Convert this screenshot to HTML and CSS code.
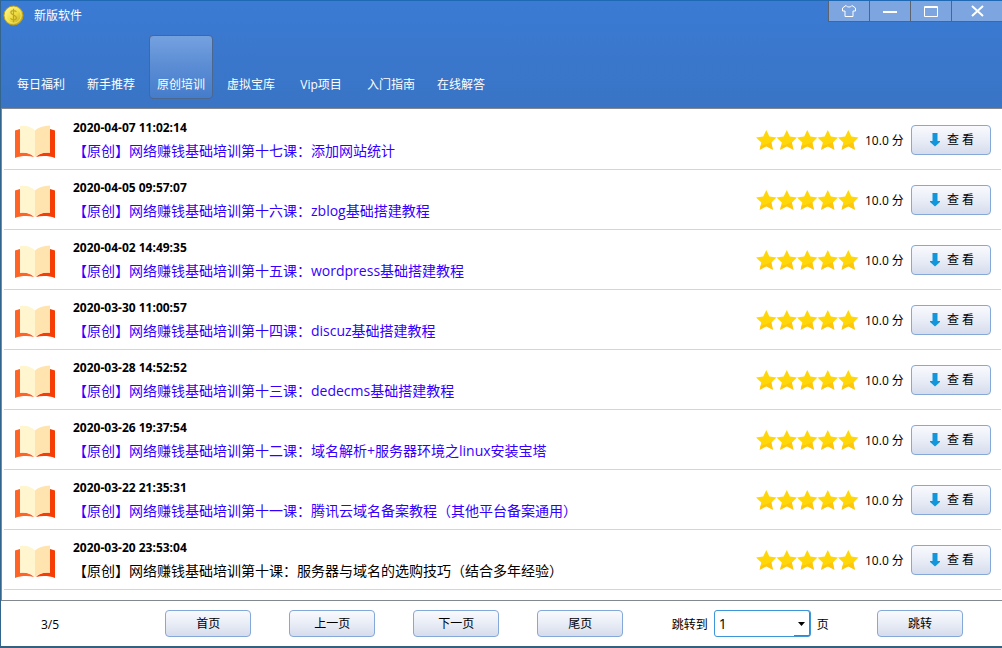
FILE: index.html
```html
<!DOCTYPE html>
<html lang="zh-CN">
<head>
<meta charset="utf-8">
<title>新版软件</title>
<link rel="stylesheet" href="styles.css">
</head>
<body>
<svg class="defs" aria-hidden="true">
  <defs>
    <linearGradient id="gold" x1="0" y1="0" x2="1" y2="1"><stop offset="0" stop-color="#fff9a0"/><stop offset=".5" stop-color="#f0df45"/><stop offset="1" stop-color="#b89a10"/></linearGradient>
    <symbol id="book" viewBox="0 0 42 36">
      <path d="M1 6.500L6 5v23.500c6-.5 11 1 14 4.500-6-1.500-13-1.300-19 1z" fill="#ff6426"/>
      <path d="M41 6.500L36 5v23.500c-6-.5-11 1-14 4.500 6-1.500 13-1.300 19 1z" fill="#f53d05"/>
      <path d="M6 2c6-1 12 1 15 4.500V33c-3-3.500-9-5-15-4z" fill="#fff5cf"/>
      <path d="M36 1.500C29 2 24 3.500 21 6.500V33c3-3.500 9-5 15-4z" fill="#ffe4b0"/>
    </symbol>
    <symbol id="stars" viewBox="0 0 103 20">
      <g id="star"><path d="M10.300 0l3.100 6.600 7.100.9-5.200 5 1.600 7.300-6.600-3.500-6.600 3.500 1.600-7.300L0 7.500l7.200-.9z" fill="#ffd708"/><path d="M18.500 9.300l-3.200 3.200 1.600 7.300-6.600-3.500-6.600 3.500.8-4C10 15 15 13 18.500 9.300z" fill="#ffc60a"/></g>
      <use href="#star" x="20.500"/><use href="#star" x="41"/><use href="#star" x="61.500"/><use href="#star" x="82"/>
    </symbol>
    <symbol id="down" viewBox="0 0 10 14"><path d="M2.500 0h5v8H10v1l-5 4.500L0 9V8h2.500z" fill="#1296db"/></symbol>
  </defs>
</svg>
<div class="window">
  <header class="header">
    <div class="titlebar">
      <svg class="coin" viewBox="0 0 22 22" aria-hidden="true"><circle cx="11" cy="11" r="10" fill="url(#gold)" stroke="#b79e1a"/><circle cx="11" cy="11" r="8" fill="none" stroke="#fff27a" stroke-width=".7"/><path d="M14 7.500c-.6-2-5.500-2.200-5.800.4-.2 2.700 6 2.500 5.800 5.700-.2 2.700-5.300 2.600-6.100.2M11 4v14" fill="none" stroke="#bfa522" stroke-width="1.300"/></svg>
      <h1 class="title">新版软件</h1>
      <div class="controls">
        <button class="control" aria-label="皮肤"><svg viewBox="0 0 16 14"><path d="M5 1.500L1.500 4v3H4v5.500h8V7h2.500V4L11 1.500C10 3.500 6 3.500 5 1.500z"/></svg></button>
        <button class="control" aria-label="最小化"><svg viewBox="0 0 16 14"><path class="thick" d="M1 8h14"/></svg></button>
        <button class="control" aria-label="最大化"><svg viewBox="0 0 16 14"><path d="M1.500 2.500h13v10h-13zM1 3.500h14"/></svg></button>
        <button class="control" aria-label="关闭"><svg viewBox="0 0 16 14"><path class="thick" d="M3 2l11 10M14 2L3 12"/></svg></button>
      </div>
    </div>
    <nav class="tabs">
      <button class="tab">每日福利</button>
      <button class="tab">新手推荐</button>
      <button class="tab active">原创培训</button>
      <button class="tab">虚拟宝库</button>
      <button class="tab">Vip项目</button>
      <button class="tab">入门指南</button>
      <button class="tab">在线解答</button>
    </nav>
  </header>
  <main class="list">
    <article class="row"><svg class="book"><use href="#book"/></svg><div class="info"><time class="date">2020-04-07 11:02:14</time><a class="link" href="#">【原创】网络赚钱基础培训第十七课：添加网站统计</a></div><svg class="stars"><use href="#stars"/></svg><span class="score">10.0 分</span><button class="btn view"><svg class="down"><use href="#down"/></svg>查 看</button></article>
    <article class="row"><svg class="book"><use href="#book"/></svg><div class="info"><time class="date">2020-04-05 09:57:07</time><a class="link" href="#">【原创】网络赚钱基础培训第十六课：zblog基础搭建教程</a></div><svg class="stars"><use href="#stars"/></svg><span class="score">10.0 分</span><button class="btn view"><svg class="down"><use href="#down"/></svg>查 看</button></article>
    <article class="row"><svg class="book"><use href="#book"/></svg><div class="info"><time class="date">2020-04-02 14:49:35</time><a class="link" href="#">【原创】网络赚钱基础培训第十五课：wordpress基础搭建教程</a></div><svg class="stars"><use href="#stars"/></svg><span class="score">10.0 分</span><button class="btn view"><svg class="down"><use href="#down"/></svg>查 看</button></article>
    <article class="row"><svg class="book"><use href="#book"/></svg><div class="info"><time class="date">2020-03-30 11:00:57</time><a class="link" href="#">【原创】网络赚钱基础培训第十四课：discuz基础搭建教程</a></div><svg class="stars"><use href="#stars"/></svg><span class="score">10.0 分</span><button class="btn view"><svg class="down"><use href="#down"/></svg>查 看</button></article>
    <article class="row"><svg class="book"><use href="#book"/></svg><div class="info"><time class="date">2020-03-28 14:52:52</time><a class="link" href="#">【原创】网络赚钱基础培训第十三课：dedecms基础搭建教程</a></div><svg class="stars"><use href="#stars"/></svg><span class="score">10.0 分</span><button class="btn view"><svg class="down"><use href="#down"/></svg>查 看</button></article>
    <article class="row"><svg class="book"><use href="#book"/></svg><div class="info"><time class="date">2020-03-26 19:37:54</time><a class="link" href="#">【原创】网络赚钱基础培训第十二课：域名解析+服务器环境之linux安装宝塔</a></div><svg class="stars"><use href="#stars"/></svg><span class="score">10.0 分</span><button class="btn view"><svg class="down"><use href="#down"/></svg>查 看</button></article>
    <article class="row"><svg class="book"><use href="#book"/></svg><div class="info"><time class="date">2020-03-22 21:35:31</time><a class="link" href="#">【原创】网络赚钱基础培训第十一课：腾讯云域名备案教程（其他平台备案通用）</a></div><svg class="stars"><use href="#stars"/></svg><span class="score">10.0 分</span><button class="btn view"><svg class="down"><use href="#down"/></svg>查 看</button></article>
    <article class="row"><svg class="book"><use href="#book"/></svg><div class="info"><time class="date">2020-03-20 23:53:04</time><a class="link plain" href="#">【原创】网络赚钱基础培训第十课：服务器与域名的选购技巧（结合多年经验）</a></div><svg class="stars"><use href="#stars"/></svg><span class="score">10.0 分</span><button class="btn view"><svg class="down"><use href="#down"/></svg>查 看</button></article>
  </main>
  <footer class="pager">
    <span class="count">3/5</span>
    <div class="pages">
      <button class="btn">首页</button>
      <button class="btn">上一页</button>
      <button class="btn">下一页</button>
      <button class="btn">尾页</button>
    </div>
    <div class="jump">
      <label for="page">跳转到</label>
      <span class="picker"><select id="page"><option>1</option><option>2</option><option>3</option><option>4</option><option>5</option></select><svg class="caret" viewBox="0 0 7 4" aria-hidden="true"><path d="M0 0h7L3.500 4z"/></svg></span>
      <span class="unit">页</span>
    </div>
    <button class="btn">跳转</button>
  </footer>
</div>
</body>
</html>
```
FILE: styles.css
```css
* { box-sizing: border-box; }

body {
  margin: 0;
  font: 12px/16px "Open Sans", "Noto Sans CJK SC", sans-serif;
  color: #000;
}

button, select { font: inherit; color: inherit; }
.defs { position: absolute; width: 0; height: 0; }

.window {
  display: flex;
  flex-direction: column;
  min-height: 100vh;
  border-left: 1px solid #33648c;
  border-bottom: 2px solid #36607f;
}

.header {
  height: 108px;
  border-top: 1px solid #1f68b4;
  background: linear-gradient(#3b7bd4, #3974c5);
  color: #fff;
}

.titlebar { display: flex; height: 34px; padding-left: 2px; }
.coin { width: 21px; height: 21px; margin-top: 4px; }
.title { margin: 6px 0 0 10px; font-size: 12px; font-weight: 400; line-height: 18px; }

.controls { display: flex; height: 21px; margin-left: auto; border-left: 1px solid #5b6270; }
.control {
  width: 41px;
  padding: 0;
  border: 0;
  border-right: 1px solid #5b6270;
  border-bottom: 1px solid #5b6270;
  background: #7da5e0;
}
.control:last-child { width: 50px; border-right: 0; }
.control svg { display: block; width: 16px; height: 14px; margin: 0 auto; fill: none; stroke: #fff; stroke-width: 1; }
.control .thick { stroke-width: 2; }

.tabs { display: flex; gap: 6px; padding-left: 8px; }
.tab {
  display: flex;
  align-items: flex-end;
  justify-content: center;
  width: 64px;
  height: 64px;
  padding: 0 0 5px;
  border: 1px solid transparent;
  border-radius: 4px;
  background: none;
  white-space: nowrap;
}
.tab.active { border-color: #4c678f; background: linear-gradient(#75a1df, #5a8cd4 50%, #457dcb); }

.list {
  flex: 1;
  padding: 1px 1px 0 2px;
  border: 1px solid #828790;
  border-right: 0;
  background: #fff;
}
.row {
  display: flex;
  align-items: center;
  height: 60px;
  padding: 0 10px;
  border-bottom: 1px solid #d5d5d5;
}
.book { width: 42px; height: 36px; margin-top: 4px; }
.info { display: flex; flex: 1; flex-direction: column; gap: 4px; margin-left: 17px; padding-top: 2px; }
.date { font-weight: 700; }
.link { font-size: 14px; line-height: 22px; color: #30f; text-decoration: none; white-space: nowrap; }
.link.plain { color: #000; }
.stars { width: 103px; height: 20px; }
.score { width: 46px; margin-left: 6px; padding-top: 2px; white-space: nowrap; }

.btn {
  width: 86px;
  height: 27px;
  padding: 0;
  border: 1px solid #84a8d8;
  border-radius: 4px;
  background: linear-gradient(#f9fafd, #e9edf7 50%, #d6dcec);
}
.view { display: flex; align-items: center; justify-content: center; gap: 7px; width: 80px; height: 30px; padding: 1px 0 0 2px; }
.down { width: 10px; height: 14px; margin-bottom: 1px; }

.pager {
  display: flex;
  align-items: center;
  justify-content: space-between;
  height: 45px;
  padding: 0 39px 0 40px;
  background: #fff;
}
.count { width: 76px; padding-top: 2px; }
.pages { display: flex; gap: 38px; }
.jump { display: flex; align-items: center; gap: 6px; }
.jump label, .unit { padding-top: 2px; }
.picker { position: relative; display: flex; }
.picker select {
  width: 97px;
  height: 27px;
  padding: 0 4px;
  border: 1px solid #3d96d8;
  border-radius: 3px;
  background: #fff;
  box-shadow: inset -1px 0 #777;
  font-size: 14px;
  appearance: none;
}
/* raised edge under the drop-down arrow */
.picker::after {
  content: "";
  position: absolute;
  right: 1px;
  bottom: 1px;
  width: 16px;
  height: 1px;
  background: #777;
  pointer-events: none;
}
.caret { position: absolute; top: 12px; right: 6px; width: 7px; height: 4px; pointer-events: none; }
```
